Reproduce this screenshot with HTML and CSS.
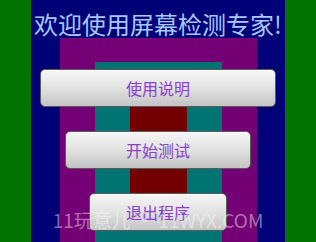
FILE: index.html
```html
<!DOCTYPE html>
<html>
	<head>
		<meta charset="utf-8">
		<link rel="stylesheet" href="styles.css">
	</head>

	<body>
		<div class = "stage">
			<div class = "band-purple">
				<div class = "band-teal">
					<div class = "band-maroon"></div>
				</div>
			</div>

			<div class = "screen">
				<h1 class = "title">欢迎使用屏幕检测专家!</h1>
				<button class = "btn btn-wide">使用说明</button>
				<button class = "btn btn-mid">开始测试</button>
				<button class = "btn btn-small">退出程序</button>
			</div>
		</div>

		<div class = "watermark">11玩意儿 • 11WYX.COM</div>
	</body>
</html>
```

FILE: styles.css
```css
html, body {
	height: 100%;
}

body {
	margin: 0;
	background: #007300;
	font-family: "Noto Sans CJK SC", "Noto Sans", sans-serif;
	overflow: hidden;
	position: relative;
}

.stage {
	position: relative;
	width: 254px;
	height: 100%;
	margin: 0 auto;
	padding-top: 38px;
	box-sizing: border-box;
	background: #000077;
	display: flex;
	flex-direction: column;
}

.band-purple {
	flex: 1;
	margin: 0 28px 0 29px;
	padding-top: 24px;
	background: #750075;
	display: flex;
	flex-direction: column;
}

.band-teal {
	flex: 1;
	margin: 0 35px;
	padding-top: 24px;
	background: #007373;
}

.band-maroon {
	height: 120px;
	margin: 0 35px;
	background: #730000;
}

.screen {
	position: absolute;
	top: 0;
	left: 0;
	right: 0;
	bottom: 0;
	display: flex;
	flex-direction: column;
	align-items: center;
}

.title {
	margin: 9px -10px 0;
	font-size: 24px;
	font-weight: normal;
	line-height: 30px;
	color: #a6c8ff;
	white-space: nowrap;
}

.btn {
	height: 38px;
	margin-top: 24px;
	padding: 0;
	border: 1px solid #5a5a5a;
	border-radius: 5px;
	background: linear-gradient(to bottom, #f6f6f6 0%, #e4e4e4 45%, #c4c4c4 100%);
	box-shadow: inset 0 1px 0 #ffffff;
	color: #8a40cc;
	font-family: inherit;
	font-size: 16px;
}

.btn-wide {
	width: 236px;
	margin-top: 30px;
}

.btn-mid {
	width: 186px;
}

.btn-small {
	width: 138px;
}

.watermark {
	position: absolute;
	left: 0;
	right: 0;
	top: 207px;
	text-align: center;
	font-size: 19px;
	line-height: 26px;
	color: rgba(255, 255, 255, 0.45);
	white-space: nowrap;
}
```
